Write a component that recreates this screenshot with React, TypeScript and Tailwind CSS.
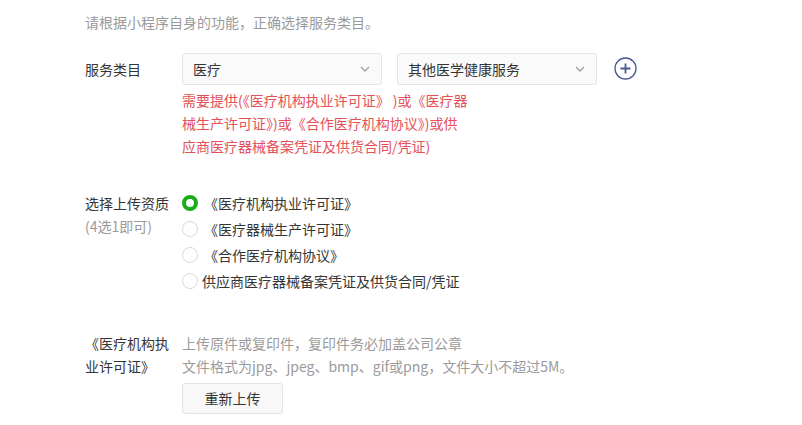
const font = { fontFamily: '"Noto Sans CJK SC", "Noto Sans", sans-serif' };

function Chevron() {
  return (
    <svg width="10" height="6" viewBox="0 0 10 6" fill="none">
      <path d="M1 1l4 4 4-4" stroke="#a0a0a0" strokeWidth="1.4" />
    </svg>
  );
}

function Select({ value }: { value: string }) {
  return (
    <div className="flex h-[32px] w-[200px] items-center justify-between rounded-[3px] border border-[#e5e5e5] bg-[#fafafa] pl-[10px] pr-[11px] text-[#353535]">
      <span>{value}</span>
      <Chevron />
    </div>
  );
}

function PlusIcon() {
  return (
    <svg width="23" height="23" viewBox="0 0 23 23" fill="none">
      <circle cx="11.5" cy="11.5" r="10.5" stroke="#4a5b92" strokeWidth="1.3" />
      <path d="M11.5 6.5v10M6.5 11.5h10" stroke="#4a5b92" strokeWidth="1.8" />
    </svg>
  );
}

const options = [
  '《医疗机构执业许可证》',
  '《医疗器械生产许可证》',
  '《合作医疗机构协议》',
  '供应商医疗器械备案凭证及供货合同/凭证',
];

export default function App() {
  return (
    <div className="h-[425px] w-[802px] overflow-hidden bg-white pl-[85px] pt-[11px] text-[14px]" style={font}>
      <p className="leading-[22px] text-[#9a9a9a]">请根据小程序自身的功能，正确选择服务类目。</p>

      {/* 服务类目 */}
      <div className="mt-[20px] flex">
        <div className="w-[97px] leading-[32px] text-[#353535]">服务类目</div>
        <div className="flex flex-col">
          <div className="flex items-center gap-[15px]">
            <Select value="医疗" />
            <Select value="其他医学健康服务" />
            <div className="ml-[2px] mt-[-1px]">
              <PlusIcon />
            </div>
          </div>
          <p className="mt-[4px] leading-[23px] text-[#e5505a]">
            需要提供(《医疗机构执业许可证》 )或《医疗器
            <br />
            械生产许可证》)或《合作医疗机构协议》)或供
            <br />
            应商医疗器械备案凭证及供货合同/凭证)
          </p>
        </div>
      </div>

      {/* 选择上传资质 */}
      <div className="mt-[32px] flex">
        <div className="w-[97px] pt-[2px] leading-[23px]">
          <div className="text-[#353535]">选择上传资质</div>
          <div className="text-[#9a9a9a]">(4选1即可)</div>
        </div>
        <div className="flex flex-col">
          {options.map((o, i) => (
            <label key={o} className="flex h-[26px] items-center gap-[4px] text-[#353535]">
              {i === 0 ? (
                <span className="h-[16px] w-[16px] rounded-full border-[4px] border-[#1aad19] bg-white" />
              ) : (
                <span className="h-[16px] w-[16px] rounded-full border border-[#d9d9d9] bg-white" />
              )}
              <span className={i === 3 ? 'ml-0' : 'ml-[2px]'}>{o}</span>
            </label>
          ))}
        </div>
      </div>

      {/* 上传 */}
      <div className="mt-[38px] flex">
        <div className="w-[84px] leading-[23px] text-[#353535]">《医疗机构执业许可证》</div>
        <div className="ml-[13px] flex flex-col">
          <p className="leading-[23px] text-[#9a9a9a]">
            上传原件或复印件，复印件务必加盖公司公章
            <br />
            文件格式为jpg、jpeg、bmp、gif或png，文件大小不超过5M。
          </p>
          <button className="mt-[5px] h-[31px] w-[101px] rounded-[3px] border border-[#e3e3e3] bg-[#f8f8f8] text-[#353535]">
            重新上传
          </button>
        </div>
      </div>
    </div>
  );
}
